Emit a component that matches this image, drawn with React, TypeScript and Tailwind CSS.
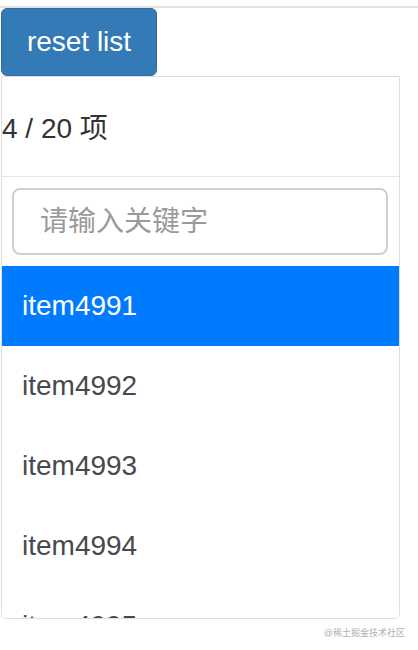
import { useState } from "react";

const allItems = Array.from({ length: 20 }, (_, i) => `item${4991 + i}`);

export default function App() {
  const [keyword, setKeyword] = useState("");
  const [active, setActive] = useState(0);

  const list = allItems.filter((it) => it.includes(keyword));

  return (
    <div className="min-h-[650px] bg-white font-['Liberation_Sans','Noto_Sans_CJK_SC',sans-serif]">
      <div className="mt-[6px] border-t-2 border-[#e4e4e4]" />

      <button
        onClick={() => {
          setKeyword("");
          setActive(0);
        }}
        className="ml-px flex h-[68px] w-[156px] items-center justify-center rounded-[6px] border border-[#2e6da4] bg-[#337ab7] text-[28px] text-white"
      >
        reset list
      </button>

      <div className="ml-px flex h-[543px] w-[399px] flex-col overflow-hidden rounded-b-[5px] border border-[#dedede]">
        <div className="flex h-[100px] shrink-0 items-center border-b border-[#e6e6e6] pt-[4px] text-[28px] text-[#333]">
          4 / 20 项
        </div>

        <div className="shrink-0 pt-[11px] pb-[11px] pl-[10px] pr-[11px]">
          <input
            value={keyword}
            onChange={(e) => setKeyword(e.target.value)}
            placeholder="请输入关键字"
            className="h-[67px] w-full rounded-[8px] border-2 border-[#d0d0d0] px-[26px] text-[28px] text-[#555] outline-none placeholder:text-[#9a9a9a]"
          />
        </div>

        <ul>
          {list.map((it, i) => (
            <li
              key={it}
              onClick={() => setActive(i)}
              className={
                i === active
                  ? "flex h-[80px] items-center bg-[#007bff] pl-[20px] text-[28px] text-white"
                  : "flex h-[80px] items-center bg-white pl-[20px] text-[28px] text-[#464a4f]"
              }
            >
              {it}
            </li>
          ))}
        </ul>
      </div>

      <div className="flex justify-end pr-[13px] pt-[8px] text-[9px] text-[#b0b0b0]">
        @稀土掘金技术社区
      </div>
    </div>
  );
}
